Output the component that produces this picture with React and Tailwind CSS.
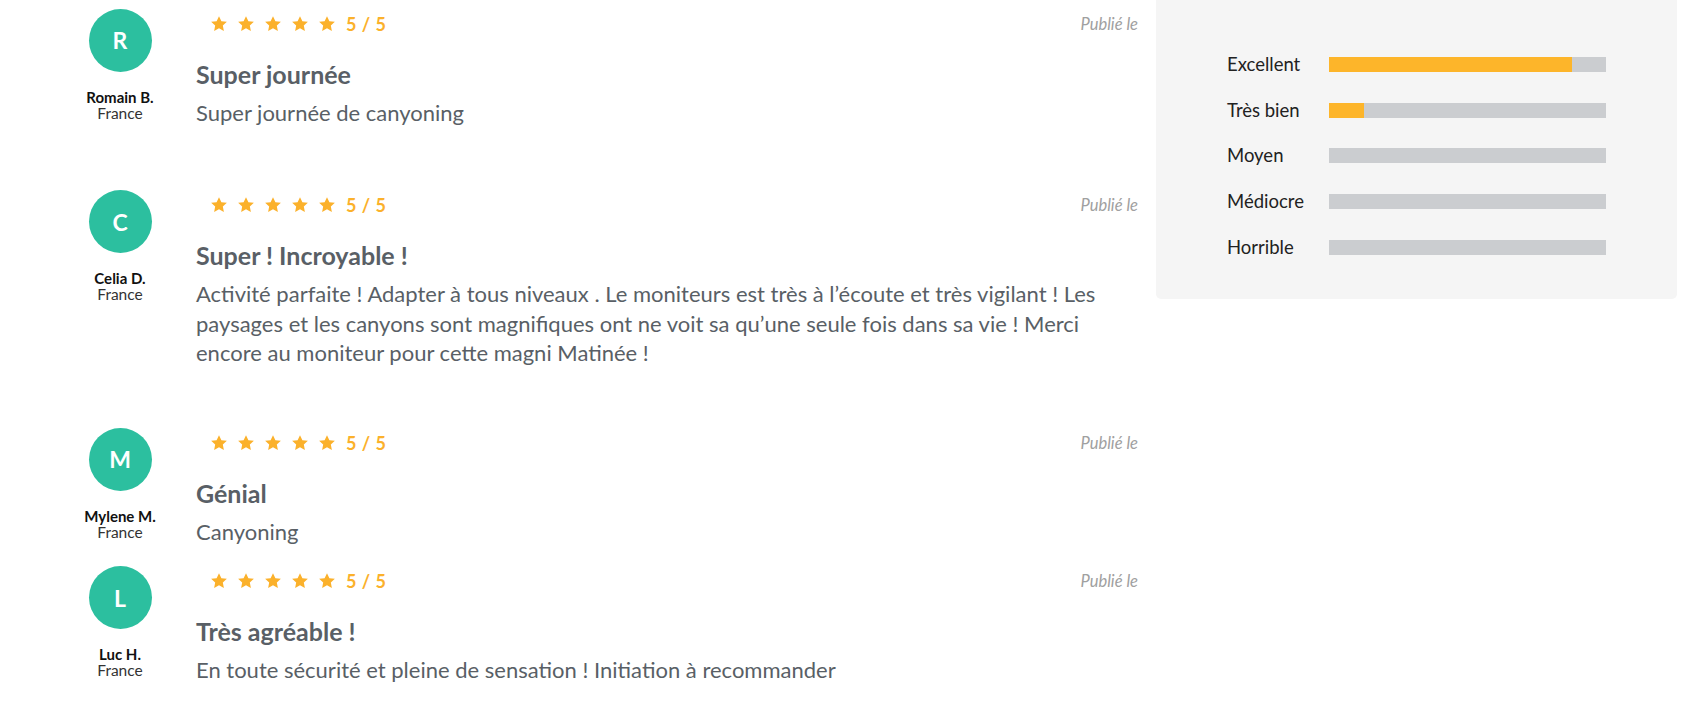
import React from "react";

const reviews = [
  {
    letter: "R",
    name: "Romain B.",
    country: "France",
    title: "Super journée",
    body: "Super journée de canyoning",
    pb: "pb-[54px]",
  },
  {
    letter: "C",
    name: "Celia D.",
    country: "France",
    title: "Super ! Incroyable !",
    body: "Activité parfaite ! Adapter à tous niveaux . Le moniteurs est très à l’écoute et très vigilant ! Les paysages et les canyons sont magnifiques ont ne voit sa qu’une seule fois dans sa vie ! Merci encore au moniteur pour cette magni Matinée !",
    pb: "pb-[52px]",
  },
  {
    letter: "M",
    name: "Mylene M.",
    country: "France",
    title: "Génial",
    body: "Canyoning",
    pb: "pb-[11px]",
  },
  {
    letter: "L",
    name: "Luc H.",
    country: "France",
    title: "Très agréable !",
    body: "En toute sécurité et pleine de sensation ! Initiation à recommander",
    pb: "pb-[20px]",
  },
];

const ratings = [
  { label: "Excellent", pct: 87.7 },
  { label: "Très bien", pct: 12.6 },
  { label: "Moyen", pct: 0 },
  { label: "Médiocre", pct: 0 },
  { label: "Horrible", pct: 0 },
];

function Star() {
  return (
    <svg viewBox="0 0 24 24" className="w-[18px] h-[18px]" fill="#fbb12b">
      <path d="M12 1.5l3.2 6.7 7.3.9-5.4 5 1.4 7.3L12 17.8l-6.5 3.6 1.4-7.3-5.4-5 7.3-.9z" />
    </svg>
  );
}

function Review({ r }) {
  return (
    <div className={`flex ${r.pb}`}>
      <div className="w-[100px] flex flex-col items-center pt-[9px]">
        <div className="w-[63px] h-[63px] rounded-full bg-[#2cbf9f] flex items-center justify-center text-white text-[23px] font-bold">
          {r.letter}
        </div>
        <div className="mt-[17px] text-[15px] leading-[16px] font-bold text-[#111]">{r.name}</div>
        <div className="text-[15.5px] leading-[16px] text-[#333]">{r.country}</div>
      </div>
      <div className="ml-[26px] w-[942px]">
        <div className="mt-[14px] h-[20px] flex items-center justify-between">
          <div className="flex items-center gap-[9px] ml-[14px]">
            <Star />
            <Star />
            <Star />
            <Star />
            <Star />
            <span className="ml-[1px] text-[18px] font-bold text-[#fbb12b] tracking-[0.5px]">5 / 5</span>
          </div>
          <span className="text-[16.5px] italic text-[#a0a0a0]">Publié le</span>
        </div>
        <div className="mt-[25px] text-[25px] leading-[30px] font-bold text-[#595f66]">{r.title}</div>
        <p className="mt-[9px] text-[22px] leading-[29.3px] text-[#595f66]">{r.body}</p>
      </div>
    </div>
  );
}

export default function App() {
  return (
    <div className="w-[1707px] h-[716px] bg-white flex overflow-hidden font-['Lato','Liberation_Sans',sans-serif]">
      <div className="pl-[70px]">
        {reviews.map((r) => (
          <Review key={r.name} r={r} />
        ))}
      </div>
      <div className="ml-[18px] w-[521px] h-[299px] bg-[#f5f5f5] rounded-b-[5px] pt-[57px] pl-[71px] self-start">
        <div className="flex flex-col gap-[30.7px]">
          {ratings.map((x) => (
            <div key={x.label} className="flex items-center h-[15px]">
              <span className="w-[102px] text-[18.5px] leading-[15px] text-[#222]">{x.label}</span>
              <div className="w-[277px] h-[15px] bg-[#cbcdd0]">
                <div className="h-full bg-[#fdb52a]" style={{ width: `${x.pct}%` }} />
              </div>
            </div>
          ))}
        </div>
      </div>
    </div>
  );
}
